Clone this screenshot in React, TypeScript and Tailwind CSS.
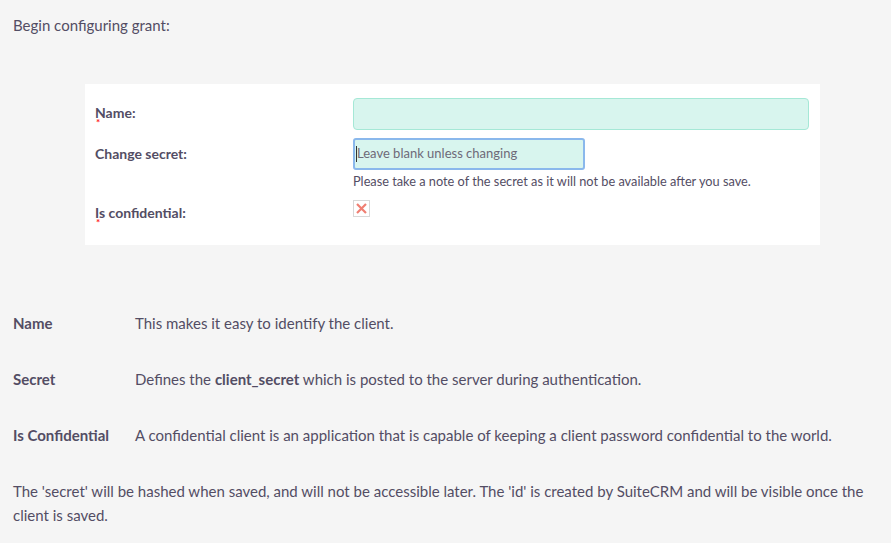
import React from "react";

function Req({ top }: { top: string }) {
  return (
    <span className={`absolute left-[1px] ${top} text-[10px] leading-none text-[#ff1a1a] font-bold`}>*</span>
  );
}

export default function App() {
  return (
    <div className="min-h-[543px] w-[891px] bg-[#f5f5f5] text-[#534d64]" style={{ fontFamily: "Lato, 'Open Sans', sans-serif" }}>
      <div className="px-[13px] pt-[15px] text-[15px] leading-[20px]">Begin configuring grant:</div>

      <div className="mt-[49px] ml-[85px] w-[735px] h-[161px] bg-white pl-[10px] pr-[11px] pt-[14px]">
        <div className="flex items-start">
          <div className="relative w-[258px] pt-[7px] text-[14px] font-bold leading-[16px]">
            Name:
            <Req top="top-[19px]" />
          </div>
          <div className="flex-1 h-[32px] rounded-[4px] border border-[#a5e8d6] bg-[#d8f5ee]" />
        </div>
        <div className="flex items-start mt-[8px]">
          <div className="relative w-[258px] pt-[8px] text-[14px] font-bold leading-[16px]">Change secret:</div>
          <div className="flex-1">
            <div className="w-[232px] h-[32px] rounded-[3px] border-2 border-[#8ab8ec] bg-[#d8f5ee] flex items-center pl-[1px] text-[13px] text-[#6e6a78]">
              <span className="w-[1px] h-[16px] bg-[#333]" />
              Leave blank unless changing
            </div>
            <div className="mt-[2px] text-[12.75px] leading-[18px] text-[#534d64]">Please take a note of the secret as it will not be available after you save.</div>
          </div>
        </div>
        <div className="flex items-start mt-[10px]">
          <div className="relative w-[258px] pt-[5px] text-[14px] font-bold leading-[16px]">
            Is confidential:
            <Req top="top-[17px]" />
          </div>
          <div className="w-[17px] h-[17px] border border-[#d8d8d8] bg-white flex items-center justify-center">
            <svg width="13" height="13" viewBox="0 0 13 13">
              <path d="M2 2 L11 11 M11 2 L2 11" stroke="#f07f73" strokeWidth="2.2" />
            </svg>
          </div>
        </div>
      </div>

      <div className="mt-[68px] px-[13px] text-[15px]">
        <div className="flex h-[56px]">
          <div className="w-[122px] shrink-0 font-bold leading-[20px]">Name</div>
          <div className="leading-[20px]">This makes it easy to identify the client.</div>
        </div>
        <div className="flex h-[56px]">
          <div className="w-[122px] shrink-0 font-bold leading-[20px]">Secret</div>
          <div className="leading-[20px]">Defines the <span className="font-bold">client_secret</span> which is posted to the server during authentication.</div>
        </div>
        <div className="flex h-[56px]">
          <div className="w-[122px] shrink-0 font-bold leading-[20px]">Is Confidential</div>
          <div className="leading-[20px]">A confidential client is an application that is capable of keeping a client password confidential to the world.</div>
        </div>
        <div className="leading-[24px] -mt-[2px] pr-[10px]">
          The 'secret' will be hashed when saved, and will not be accessible later. The 'id' is created by SuiteCRM and will be visible once the client is saved.
        </div>
      </div>
    </div>
  );
}
